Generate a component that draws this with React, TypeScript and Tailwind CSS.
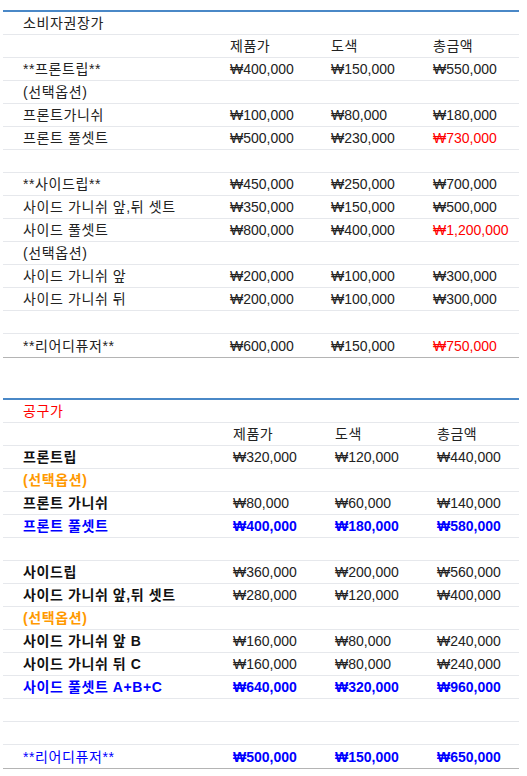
type Row = {
  name?: string;
  price?: string;
  paint?: string;
  total?: string;
  kind?: "title" | "head" | "plain" | "red" | "option" | "bold" | "blue" | "empty";
};

const retail: Row[] = [
  { name: "소비자권장가", kind: "title" },
  { price: "제품가", paint: "도색", total: "총금액", kind: "head" },
  { name: "**프론트립**", price: "₩400,000", paint: "₩150,000", total: "₩550,000" },
  { name: "(선택옵션)" },
  { name: "프론트가니쉬", price: "₩100,000", paint: "₩80,000", total: "₩180,000" },
  { name: "프론트 풀셋트", price: "₩500,000", paint: "₩230,000", total: "₩730,000", kind: "red" },
  { kind: "empty" },
  { name: "**사이드립**", price: "₩450,000", paint: "₩250,000", total: "₩700,000" },
  { name: "사이드 가니쉬 앞,뒤 셋트", price: "₩350,000", paint: "₩150,000", total: "₩500,000" },
  { name: "사이드 풀셋트", price: "₩800,000", paint: "₩400,000", total: "₩1,200,000", kind: "red" },
  { name: "(선택옵션)" },
  { name: "사이드 가니쉬 앞", price: "₩200,000", paint: "₩100,000", total: "₩300,000" },
  { name: "사이드 가니쉬 뒤", price: "₩200,000", paint: "₩100,000", total: "₩300,000" },
  { kind: "empty" },
  { name: "**리어디퓨저**", price: "₩600,000", paint: "₩150,000", total: "₩750,000", kind: "red" },
];

const group: Row[] = [
  { name: "공구가", kind: "title" },
  { price: "제품가", paint: "도색", total: "총금액", kind: "head" },
  { name: "프론트립", price: "₩320,000", paint: "₩120,000", total: "₩440,000", kind: "bold" },
  { name: "(선택옵션)", kind: "option" },
  { name: "프론트 가니쉬", price: "₩80,000", paint: "₩60,000", total: "₩140,000", kind: "bold" },
  { name: "프론트 풀셋트", price: "₩400,000", paint: "₩180,000", total: "₩580,000", kind: "blue" },
  { kind: "empty" },
  { name: "사이드립", price: "₩360,000", paint: "₩200,000", total: "₩560,000", kind: "bold" },
  { name: "사이드 가니쉬 앞,뒤 셋트", price: "₩280,000", paint: "₩120,000", total: "₩400,000", kind: "bold" },
  { name: "(선택옵션)", kind: "option" },
  { name: "사이드 가니쉬 앞 B", price: "₩160,000", paint: "₩80,000", total: "₩240,000", kind: "bold" },
  { name: "사이드 가니쉬 뒤 C", price: "₩160,000", paint: "₩80,000", total: "₩240,000", kind: "bold" },
  { name: "사이드 풀셋트 A+B+C", price: "₩640,000", paint: "₩320,000", total: "₩960,000", kind: "blue" },
  { kind: "empty" },
  { kind: "empty" },
  { name: "**리어디퓨저**", price: "₩500,000", paint: "₩150,000", total: "₩650,000", kind: "blue" },
];

function PriceTable({ rows, cols, isGroup }: { rows: Row[]; cols: string; isGroup?: boolean }) {
  return (
    <div className="border-t-2 border-b border-t-[#4a88c7] border-b-[#b4b4b4]">
      {rows.map((r, i) => {
        const last = i === rows.length - 1;
        let nameCls = "text-[#222]";
        let numCls = "text-[#222]";
        let totalCls = "text-[#222]";
        if (r.kind === "title" && isGroup) nameCls = "text-[#ff0000]";
        if (r.kind === "red") totalCls = "text-[#ff0000]";
        if (r.kind === "option") nameCls = "text-[#ff9900] font-bold";
        if (r.kind === "bold") nameCls = "text-[#111] font-bold";
        if (r.kind === "blue") {
          nameCls = "text-[#0000ff]" + (r.name?.startsWith("**") ? "" : " font-bold");
          numCls = "text-[#0000ff] font-bold";
          totalCls = numCls;
        }
        if (r.kind === "head") {
          numCls = "tracking-[0.5px]";
          totalCls = numCls;
        }
        return (
          <div
            key={i}
            className={`grid ${cols} h-[23px] items-center ${last ? "" : "border-b border-[#e6e8ec]"}`}
          >
            <div className={`pl-5 whitespace-nowrap tracking-[0.6px] ${nameCls}`}>{r.name}</div>
            <div className={`pl-5 whitespace-nowrap ${numCls}`}>{r.price}</div>
            <div className={`pl-5 whitespace-nowrap ${numCls}`}>{r.paint}</div>
            <div className={`pl-5 whitespace-nowrap ${totalCls}`}>{r.total}</div>
          </div>
        );
      })}
    </div>
  );
}

export default function App() {
  return (
    <div
      className="w-[527px] min-h-[776px] bg-white pt-[10px] pl-[3px] pr-[8px] text-[14px] leading-none text-[#222]"
      style={{ fontFamily: '"Liberation Sans", "Noto Sans CJK KR", sans-serif' }}
    >
      <PriceTable rows={retail} cols="grid-cols-[207px_101px_102px_1fr]" />
      <div className="h-[40px]" />
      <PriceTable rows={group} cols="grid-cols-[210px_102px_102px_1fr]" isGroup />
    </div>
  );
}
